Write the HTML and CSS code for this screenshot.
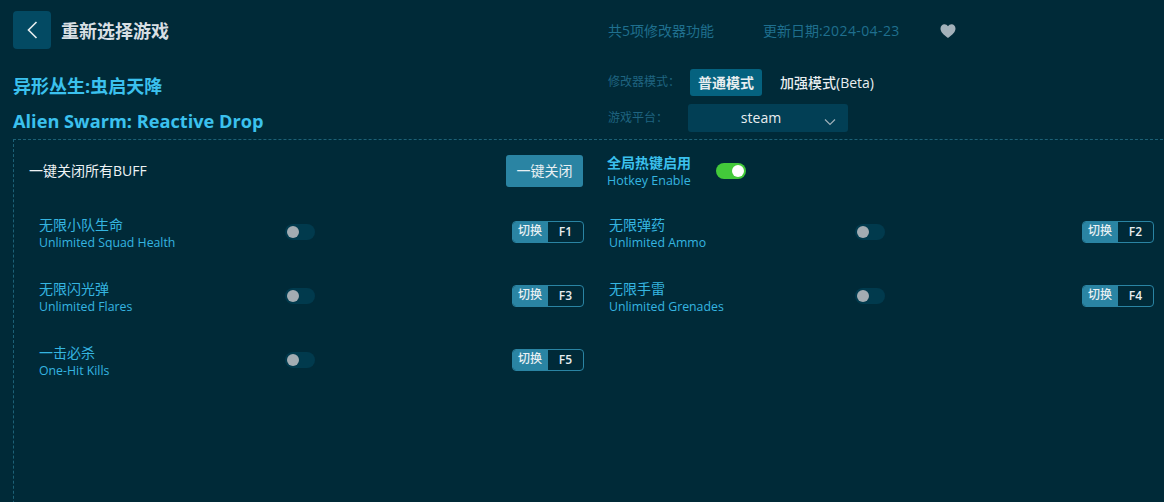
FILE: index.html
```html
<!DOCTYPE html>
<html lang="zh">
<head>
<meta charset="utf-8">
<title>重新选择游戏</title>
<link rel="stylesheet" href="styles.css">
</head>
<body>
<div class="page">
  <header class="top">
    <div class="top-left">
      <button class="back" aria-label="返回">
        <svg width="12" height="20" viewBox="0 0 12 20"><path d="M10.500 2 2.500 10l8 8" fill="none" stroke="#e8eef0" stroke-width="1.600"/></svg>
      </button>
      <h1 class="page-title">重新选择游戏</h1>
    </div>
    <div class="top-right">
      <span class="meta meta-count">共5项修改器功能</span>
      <span class="meta meta-date">更新日期:<span class="date-value">2024-04-23</span></span>
      <svg class="heart" width="16" height="14" viewBox="0 0 16 14"><path d="M8 14C3.500 10.400.5 8 .5 4.400.5 1.900 2.400.2 4.400.2 5.900.2 7.200 1 8 2.300 8.800 1 10.100.2 11.600.2c2 0 3.900 1.700 3.900 4.200C15.500 8 12.500 10.400 8 14Z" fill="#a3b1ba"/></svg>
    </div>
  </header>

  <section class="game">
    <div class="names">
      <div class="name">异形丛生:虫启天降</div>
      <div class="name name-en">Alien Swarm: Reactive Drop</div>
    </div>
    <div class="options">
      <div class="opt-row opt-mode">
        <span class="opt-label">修改器模式：</span>
        <span class="mode mode-on">普通模式</span>
        <span class="mode">加强模式(Beta)</span>
      </div>
      <div class="opt-row opt-platform">
        <span class="opt-label">游戏平台：</span>
        <div class="select">
          <span>steam</span>
          <svg class="caret" width="12" height="8" viewBox="0 0 12 8"><path d="M1 1.500 6 6.500l5-5" fill="none" stroke="#9fb0b9" stroke-width="1.200"/></svg>
        </div>
      </div>
    </div>
  </section>

  <main class="panel">
    <div class="master">
      <div class="master-left">
        <span class="master-text">一键关闭所有BUFF</span>
        <button class="close-all">一键关闭</button>
      </div>
      <div class="hotkey">
        <div class="hotkey-text">
          <div class="hotkey-cn">全局热键启用</div>
          <div class="hotkey-en">Hotkey Enable</div>
        </div>
        <span class="toggle toggle-on"><i></i></span>
      </div>
    </div>
    <div class="cheats">
      <div class="cheat">
        <div class="cheat-text"><div class="cn">无限小队生命</div><div class="en">Unlimited Squad Health</div></div>
        <span class="toggle"><i></i></span>
        <div class="key"><span class="key-tag">切换</span><span class="key-name">F1</span></div>
      </div>
      <div class="cheat">
        <div class="cheat-text"><div class="cn">无限弹药</div><div class="en">Unlimited Ammo</div></div>
        <span class="toggle"><i></i></span>
        <div class="key"><span class="key-tag">切换</span><span class="key-name">F2</span></div>
      </div>
      <div class="cheat">
        <div class="cheat-text"><div class="cn">无限闪光弹</div><div class="en">Unlimited Flares</div></div>
        <span class="toggle"><i></i></span>
        <div class="key"><span class="key-tag">切换</span><span class="key-name">F3</span></div>
      </div>
      <div class="cheat">
        <div class="cheat-text"><div class="cn">无限手雷</div><div class="en">Unlimited Grenades</div></div>
        <span class="toggle"><i></i></span>
        <div class="key"><span class="key-tag">切换</span><span class="key-name">F4</span></div>
      </div>
      <div class="cheat">
        <div class="cheat-text"><div class="cn">一击必杀</div><div class="en">One-Hit Kills</div></div>
        <span class="toggle"><i></i></span>
        <div class="key"><span class="key-tag">切换</span><span class="key-name">F5</span></div>
      </div>
    </div>
  </main>
</div>
</body>
</html>
```
FILE: styles.css
```css
* { box-sizing: border-box; }
html, body { margin: 0; height: 100%; }
body {
  background: #002a38;
  font-family: "Open Sans", "Noto Sans CJK SC", sans-serif;
  overflow: hidden;
}
.page { width: 1164px; height: 502px; padding: 11px 0 0 13px; overflow: hidden; }

.top { display: flex; height: 38px; align-items: center; }
.top-left { display: flex; align-items: center; gap: 10px; width: 595px; }
.back {
  width: 38px; height: 38px; padding: 0; border: 0; border-radius: 4px;
  background: #034a63; display: flex; align-items: center; justify-content: center;
}
.page-title { margin: 2px 0 0; font-size: 18px; line-height: 24px; font-weight: 700; color: #d8dfe3; }
.top-right { display: flex; align-items: center; padding-top: 2px; }
.meta { font-size: 14px; line-height: 18px; color: #1f6f8e; }
.meta-count { width: 155px; }
.meta-date { width: 177px; }
.date-value { letter-spacing: 0.400px; }
.heart { display: block; }

.game { display: flex; margin-top: 13px; height: 77px; }
.names { width: 595px; padding-top: 12px; }
.name { font-size: 18px; line-height: 24px; font-weight: 700; color: #3bc1ee; }
.name-en { margin-top: 11px; font-size: 18.200px; }
.options { display: flex; flex-direction: column; }
.opt-row { display: flex; align-items: center; }
.opt-mode { height: 28px; margin-top: 6px; }
.opt-platform { height: 28px; margin-top: 8px; }
.opt-label { font-size: 12px; line-height: 16px; color: #1f6480; width: 82px; }
.opt-platform .opt-label { width: 80px; }
.mode {
  height: 27px; padding: 0 8px; border-radius: 3px; font-size: 14px; line-height: 27px;
  font-weight: 500; color: #e8eef0;
}
.mode-on { background: #05627f; margin-right: 10px; font-weight: 700; }
.select {
  position: relative; width: 160px; height: 28px; border-radius: 3px; background: #023f55;
  color: #e8eef0; font-size: 14px; line-height: 28px; font-weight: 500; text-align: center;
  padding-right: 14px;
}
.caret { position: absolute; right: 12px; top: 14px; }

.panel {
  height: 400px; margin-right: -4px; padding: 14px 0 0 0;
  border-top: 1px dashed #1c6176; border-left: 1px dashed #1c6176;
}
.master { display: flex; height: 34px; align-items: center; }
.master-left { width: 569px; padding: 0 0 0 15px; display: flex; align-items: center; justify-content: space-between; }
.master-text { font-size: 14px; line-height: 18px; color: #eef3f5; }
.close-all {
  width: 77px; height: 32px; padding: 0; border: 0; border-radius: 3px; background: #2a84a3;
  color: #e8f0f3; font-family: inherit; font-size: 14px; line-height: 32px;
}
.hotkey { display: flex; align-items: center; margin-left: 24px; gap: 25px; padding-top: 1px; }
.hotkey-cn { font-size: 14px; line-height: 18px; font-weight: 700; color: #3bc1ee; }
.hotkey-en { font-size: 12.500px; line-height: 17px; color: #35b5e0; }
.hotkey-text { width: 84px; white-space: nowrap; }

.toggle { position: relative; display: block; width: 30px; height: 16px; border-radius: 8px; background: #013a4d; flex: none; }
.toggle i { position: absolute; left: 2px; top: 2px; width: 12px; height: 12px; border-radius: 50%; background: #a3acb2; }
.toggle-on { background: #43c93a; top: -1px; }
.toggle-on i { left: 16px; background: #fff; }

.cheats { display: grid; grid-template-columns: 570px 570px; grid-auto-rows: 64px; margin-top: 12px; }
.cheat { display: flex; align-items: center; height: 64px; padding-left: 25px; }
.cheat-text { width: 246px; padding-top: 2px; }
.cn { font-size: 14px; line-height: 19px; color: #35b5e0; }
.en { font-size: 12.300px; line-height: 17px; color: #35b5e0; }
.key {
  display: flex; margin-left: 197px; width: 72px; height: 22px; border: 1px solid #2a84a3; border-radius: 4px;
  overflow: hidden; font-size: 12px; line-height: 20px;
}
.key-tag { width: 36px; margin: -1px 0 -1px -1px; background: #2a84a3; color: #e8f0f3; text-align: center; line-height: 20px; font-weight: 500; }
.key-name { flex: 1; text-align: center; color: #e8eef0; font-weight: 600; }
```
